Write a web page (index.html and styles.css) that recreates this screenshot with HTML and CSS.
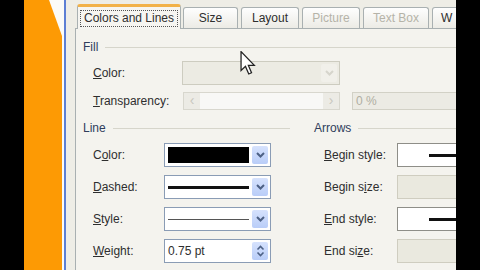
FILE: index.html
```html
<!DOCTYPE html>
<html lang="en">
<head>
    <meta charset="UTF-8">
    <meta name="viewport" content="width=device-width, initial-scale=1.0">
    <title>Format AutoShape</title>
    <link rel="stylesheet" href="styles.css">
</head>
<body>
    <div class="screen">
        <div class="edge-black"></div>
        <div class="edge-orange"><div class="orange"></div></div>
        <div class="frame-line"></div>

        <div class="dialog">
            <div class="tabs">
                <div class="tab active"><span class="focus">Colors and Lines</span></div>
                <div class="tab w-size">Size</div>
                <div class="tab w-layout">Layout</div>
                <div class="tab w-picture disabled">Picture</div>
                <div class="tab w-textbox disabled">Text Box</div>
                <div class="tab w-web">W</div>
            </div>

            <div class="page">
                <!-- Fill -->
                <div class="group-title">Fill<span class="rule"></span></div>
                <div class="row fill-row">
                    <span class="label fill-label"><u>C</u>olor:</span>
                    <div class="combo disabled wide">
                        <div class="combo-value"></div>
                        <div class="drop faint"><svg width="9" height="6" viewBox="0 0 9 6"><path d="M1 1 L4.5 4.5 L8 1" fill="none" stroke="#d6d5cc" stroke-width="2"/></svg></div>
                    </div>
                </div>
                <div class="row fill-row">
                    <span class="label fill-label"><u>T</u>ransparency:</span>
                    <div class="slider">
                        <div class="slide-btn">&lsaquo;</div>
                        <div class="slide-track"></div>
                        <div class="slide-btn">&rsaquo;</div>
                    </div>
                    <div class="spin disabled">0 %</div>
                </div>

                <div class="cols">
                    <!-- Line -->
                    <div class="col line-col">
                        <div class="group-title">Line<span class="rule"></span></div>
                        <div class="row">
                            <span class="label">C<u>o</u>lor:</span>
                            <div class="combo">
                                <div class="combo-value"><div class="swatch"></div></div>
                                <div class="drop"><svg width="9" height="6" viewBox="0 0 9 6"><path d="M1 1 L4.5 4.5 L8 1" fill="none" stroke="#4d6185" stroke-width="2"/></svg></div>
                            </div>
                        </div>
                        <div class="row">
                            <span class="label"><u>D</u>ashed:</span>
                            <div class="combo">
                                <div class="combo-value"><div class="stroke thick"></div></div>
                                <div class="drop"><svg width="9" height="6" viewBox="0 0 9 6"><path d="M1 1 L4.5 4.5 L8 1" fill="none" stroke="#4d6185" stroke-width="2"/></svg></div>
                            </div>
                        </div>
                        <div class="row">
                            <span class="label"><u>S</u>tyle:</span>
                            <div class="combo">
                                <div class="combo-value"><div class="stroke thin"></div></div>
                                <div class="drop"><svg width="9" height="6" viewBox="0 0 9 6"><path d="M1 1 L4.5 4.5 L8 1" fill="none" stroke="#4d6185" stroke-width="2"/></svg></div>
                            </div>
                        </div>
                        <div class="row">
                            <span class="label"><u>W</u>eight:</span>
                            <div class="combo">
                                <div class="combo-value text">0.75 pt</div>
                                <div class="drop spinner">
                                    <svg width="9" height="12" viewBox="0 0 9 12"><path d="M1.5 4.5 L4.5 1.5 L7.5 4.5 M1.5 7.5 L4.5 10.5 L7.5 7.5" fill="none" stroke="#4d6185" stroke-width="1.6"/></svg>
                                </div>
                            </div>
                        </div>
                    </div>

                    <!-- Arrows -->
                    <div class="col arrows-col">
                        <div class="group-title">Arrows<span class="rule"></span></div>
                        <div class="row">
                            <span class="label arrow-label"><u>B</u>egin style:</span>
                            <div class="box"><div class="arrow-line"></div></div>
                        </div>
                        <div class="row">
                            <span class="label arrow-label">Begin s<u>i</u>ze:</span>
                            <div class="box disabled"></div>
                        </div>
                        <div class="row">
                            <span class="label arrow-label"><u>E</u>nd style:</span>
                            <div class="box"><div class="arrow-line"></div></div>
                        </div>
                        <div class="row">
                            <span class="label arrow-label">End si<u>z</u>e:</span>
                            <div class="box disabled"></div>
                        </div>
                    </div>
                </div>
            </div>

            <svg class="cursor" width="16" height="24" viewBox="0 0 12 19">
                <path d="M0.5 0.5 L0.5 15.5 L4 12.2 L6.6 18.2 L8.8 17.2 L6.3 11.4 L11 11.4 Z" fill="#fff" stroke="#222" stroke-width="1"/>
            </svg>
        </div>

        <div class="edge-black"></div>
    </div>
</body>
</html>
```

FILE: styles.css
```css
body {
    margin: 0;
    padding: 0;
    font-family: 'Liberation Sans', Arial, sans-serif;
    font-size: 12px;
    color: #2e2e2e;
    overflow: hidden;
}

.screen {
    display: flex;
    width: 480px;
    height: 270px;
    overflow: hidden;
}

.edge-black {
    width: 24px;
    flex: none;
    background-color: #000;
}

.edge-orange {
    width: 40px;
    flex: none;
    background-color: #fbfbf8;
}

.orange {
    width: 38px;
    height: 100%;
    background-color: #fd9a04;
    clip-path: polygon(0 0, 25px 0, 38px 36px, 38px 100%, 0 100%);
}

.frame-line {
    width: 2px;
    flex: none;
    background-color: #5d7fd4;
}

.dialog {
    width: 390px;
    flex: none;
    position: relative;
    overflow: hidden;
    background-color: #eeede6;
    padding-left: 9px;
    box-sizing: border-box;
}

/* tab strip */
.tabs {
    display: flex;
    align-items: flex-end;
    height: 28px;
    padding-left: 2px;
    gap: 3px;
    width: 460px;
}

.tab {
    height: 20px;
    line-height: 20px;
    text-align: center;
    border: 1px solid #a9b0b1;
    border-bottom: none;
    border-radius: 3px 3px 0 0;
    background: linear-gradient(#fefefe, #ecebe5);
    box-sizing: content-box;
}

.tab.active {
    width: 102px;
    height: 22px;
    line-height: 22px;
    margin-bottom: -1px;
    margin-right: -1px;
    position: relative;
    z-index: 1;
    background: #f6f5f1;
    border-top: 3px solid #f2b148;
}

.focus {
    border: 1px dotted #555;
    padding: 0 3px 1px;
}

.w-size { width: 53px; }
.w-layout { width: 56px; }
.w-picture { width: 56px; }
.w-textbox { width: 64px; }
.w-web { width: 40px; text-align: left; padding-left: 8px; }

.tab.disabled {
    color: #b5b3a8;
}

/* page */
.page {
    width: 440px;
    height: 250px;
    border: 1px solid #a9b0b1;
    background-color: #f4f3ee;
    padding: 11px 0 0 7px;
    box-sizing: border-box;
}

.group-title {
    display: flex;
    align-items: center;
    height: 14px;
    color: #2f3d5c;
}

.rule {
    flex: 1;
    height: 1px;
    margin-left: 7px;
    background-color: #d6d5cb;
}

.row {
    display: flex;
    align-items: center;
    height: 24px;
    margin-top: 8px;
}

.fill-row {
    margin-top: 7px;
}

.fill-row + .fill-row {
    margin-top: 4px;
}

.label {
    width: 71px;
    padding-left: 10px;
    flex: none;
}

.fill-label {
    width: 89px;
}

.arrow-label {
    width: 73px;
}

/* combos */
.combo {
    display: flex;
    width: 107px;
    height: 24px;
    border: 1px solid #8a9cb5;
    background-color: #fff;
    box-sizing: border-box;
    padding: 2px;
    gap: 2px;
}

.combo.wide {
    width: 158px;
}

.combo.disabled {
    background-color: #ecebe3;
    border-color: #cdccc0;
}

.combo-value {
    flex: 1;
    display: flex;
    align-items: center;
    padding: 0 1px;
}

.swatch {
    width: 100%;
    height: 16px;
    background-color: #000;
}

.stroke {
    width: 100%;
    background-color: #111;
}

.stroke.thick { height: 3px; }
.stroke.thin { height: 1px; background-color: #555; }

.drop {
    width: 16px;
    display: flex;
    align-items: center;
    justify-content: center;
    background: linear-gradient(#d6e2fd, #b9cdf8);
    border-radius: 2px;
}

.drop.faint {
    background: #f1f0ea;
}

/* slider */
.slider {
    display: flex;
    width: 157px;
    height: 18px;
    border: 1px solid #d8d7ce;
    background-color: #f8f8f6;
    box-sizing: border-box;
    margin-left: 1px;
}

.slide-btn {
    width: 16px;
    text-align: center;
    line-height: 15px;
    font-size: 14px;
    color: #c8c7be;
    background-color: #ecebe5;
}

.slide-track {
    flex: 1;
}

.spin {
    width: 110px;
    height: 18px;
    margin-left: 12px;
    border: 1px solid #d2d1c6;
    background-color: #ecebe4;
    color: #b0aea2;
    line-height: 16px;
    padding-left: 3px;
    box-sizing: border-box;
}

/* line / arrows columns */
.cols {
    display: flex;
    margin-top: 8px;
}

.line-col {
    width: 207px;
}

.arrows-col {
    margin-left: 24px;
    width: 200px;
}

.box {
    width: 90px;
    height: 24px;
    border: 1px solid #8e8e88;
    background-color: #fff;
    box-sizing: border-box;
    display: flex;
    align-items: center;
    padding-left: 31px;
}

.box.disabled {
    background-color: #eae9df;
    border-color: #cfcdc0;
}

.arrow-line {
    flex: 1;
    height: 3px;
    background-color: #111;
}

.cursor {
    position: absolute;
    left: 174px;
    top: 51px;
}
```
